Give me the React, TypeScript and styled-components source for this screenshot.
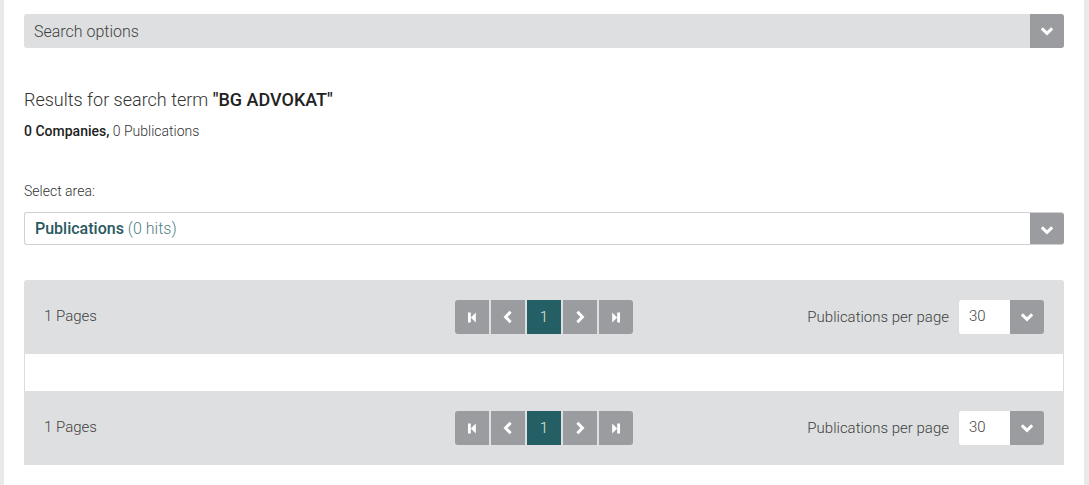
import React from "react";
import styled, { createGlobalStyle } from "styled-components";

const Global = createGlobalStyle`
  html, body { margin: 0; padding: 0; background: #e9e9e9; }
  body { font-family: Roboto, "Liberation Sans", Arial, sans-serif; color: #333; }
  * { box-sizing: border-box; }
`;

const Frame = styled.div`
  margin: 0 5px 0 4px;
  background: #fff;
  padding: 14px 20px 20px;
  min-height: 485px;
`;

const Accordion = styled.div`
  display: flex;
  height: 34px;
  background: #dedfe0;
  border-radius: 3px;
  overflow: hidden;
`;

const AccordionLabel = styled.div`
  flex: 1;
  display: flex;
  align-items: center;
  padding-left: 10px;
  font-size: 16px;
  font-weight: 300;
  color: #3f3f3f;
`;

const ChevronBox = styled.div<{ $h?: number }>`
  width: 34px;
  height: ${(p) => p.$h ?? 34}px;
  background: #9a9c9f;
  display: flex;
  align-items: center;
  justify-content: center;
  flex: none;
`;

const Heading = styled.div`
  margin-top: 40px;
  font-size: 18px;
  font-weight: 300;
  color: #333;
  line-height: 24px;
  b { font-weight: 500; color: #222; }
`;

const Counts = styled.div`
  margin-top: 10px;
  font-size: 14px;
  font-weight: 300;
  color: #333;
  line-height: 18px;
  b { font-weight: 500; color: #222; }
`;

const Label = styled.div`
  margin-top: 42px;
  font-size: 14px;
  font-weight: 300;
  color: #333;
  line-height: 18px;
`;

const Select = styled.div`
  margin-top: 12px;
  display: flex;
  height: 33px;
  border: 1px solid #cfd0d1;
  border-right: none;
  border-radius: 3px;
  overflow: hidden;
`;

const SelectText = styled.div`
  flex: 1;
  display: flex;
  align-items: center;
  padding-left: 10px;
  font-size: 16px;
  font-weight: 300;
  color: #4f7d85;
  b { font-weight: 500; color: #2a5860; margin-right: 4px; }
`;

const Results = styled.div`
  margin-top: 35px;
  display: flex;
  flex-direction: column;
`;

const Bar = styled.div<{ $top?: boolean }>`
  height: 74px;
  background: #dedfe0;
  border-radius: ${(p) => (p.$top ? "3px 3px 0 0" : "0")};
  display: grid;
  grid-template-columns: 1fr auto 1fr;
  align-items: center;
  padding: 0 20px;
`;

const Empty = styled.div`
  height: 37px;
  border-left: 1px solid #dcdcdc;
  border-right: 1px solid #dcdcdc;
  background: #fff;
`;

const PagesText = styled.div`
  font-size: 15px;
  font-weight: 300;
  color: #3f3f3f;
  padding-bottom: 2px;
`;

const Pager = styled.div`
  display: flex;
  gap: 2px;
  border-radius: 3px;
  overflow: hidden;
`;

const PageBtn = styled.div<{ $active?: boolean }>`
  width: 34px;
  height: 34px;
  background: ${(p) => (p.$active ? "#245f66" : "#9a9c9f")};
  color: #e8e8d8;
  display: flex;
  align-items: center;
  justify-content: center;
  font-size: 15px;
  font-weight: 300;
`;

const PerPage = styled.div`
  justify-self: end;
  display: flex;
  align-items: center;
  gap: 10px;
  font-size: 15px;
  font-weight: 300;
  color: #3f3f3f;
`;

const PerSelect = styled.div`
  display: flex;
  border-radius: 3px;
  overflow: hidden;
`;

const PerValue = styled.div`
  width: 51px;
  height: 34px;
  background: #fff;
  display: flex;
  align-items: center;
  padding-left: 10px;
  padding-bottom: 2px;
  font-size: 15px;
  font-weight: 300;
  color: #444;
`;

const Chevron = ({ dir = "down" }: { dir?: "down" | "left" | "right" }) => {
  const rot = dir === "down" ? 0 : dir === "left" ? 90 : -90;
  return (
    <svg width={14} height={14} viewBox="0 0 14 14" style={{ transform: `rotate(${rot}deg)` }}>
      <path d="M1.8 4.4 L7 9.4 L12.2 4.4" fill="none" stroke="#fff" strokeWidth="3" strokeLinecap="butt" strokeLinejoin="miter" />
    </svg>
  );
};

const Step = ({ dir }: { dir: "first" | "last" }) => (
  <svg width="10" height="11" viewBox="0 0 10 11" style={{ transform: dir === "last" ? "scaleX(-1)" : undefined }}>
    <rect x="1" y="0.5" width="2.8" height="10" fill="#fff" />
    <path d="M8.8 0.5 L8.8 10.5 L3.8 5.5 Z" fill="#fff" />
  </svg>
);

const PagerBar = ({ top }: { top?: boolean }) => (
  <Bar $top={top}>
    <PagesText>1 Pages</PagesText>
    <Pager>
      <PageBtn><Step dir="first" /></PageBtn>
      <PageBtn><Chevron dir="left" /></PageBtn>
      <PageBtn $active>1</PageBtn>
      <PageBtn><Chevron dir="right" /></PageBtn>
      <PageBtn><Step dir="last" /></PageBtn>
    </Pager>
    <PerPage>
      Publications per page
      <PerSelect>
        <PerValue>30</PerValue>
        <ChevronBox><Chevron /></ChevronBox>
      </PerSelect>
    </PerPage>
  </Bar>
);

export default function App() {
  return (
    <>
      <Global />
      <Frame>
        <Accordion>
          <AccordionLabel>Search options</AccordionLabel>
          <ChevronBox><Chevron /></ChevronBox>
        </Accordion>
        <Heading>
          Results for search term <b>"BG ADVOKAT"</b>
        </Heading>
        <Counts>
          <b>0 Companies,</b> 0 Publications
        </Counts>
        <Label>Select area:</Label>
        <Select>
          <SelectText>
            <b>Publications</b>(0 hits)
          </SelectText>
          <ChevronBox $h={33}><Chevron /></ChevronBox>
        </Select>
        <Results>
          <PagerBar top />
          <Empty />
          <PagerBar />
        </Results>
      </Frame>
    </>
  );
}
